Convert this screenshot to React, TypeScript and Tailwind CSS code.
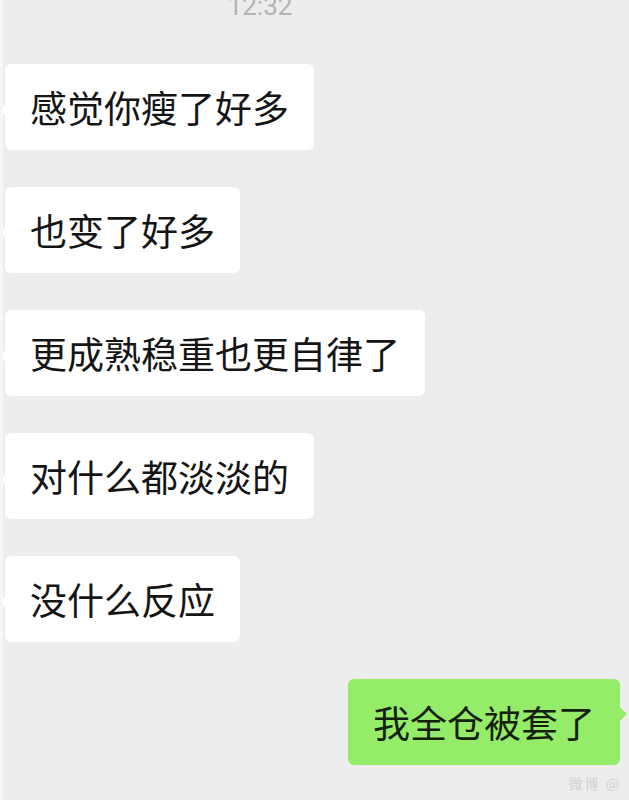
import React from 'react'

const messages = ['感觉你瘦了好多', '也变了好多', '更成熟稳重也更自律了', '对什么都淡淡的', '没什么反应']

const font = { fontFamily: '"Noto Sans CJK SC", "Noto Sans", sans-serif' }

const LeftBubble = ({ text }: { text: string }) => (
	<div className="relative self-start ml-[5px]">
		{/* tail */}
		<div className="absolute left-[-5px] top-[40px] w-0 h-0 border-y-[6px] border-y-transparent border-r-[6px] border-r-white" />
		<div className="bg-white rounded-[6px] h-[86px] px-[25px] flex items-center text-[37px] text-[#151515] leading-none">
			{text}
		</div>
	</div>
)

const RightBubble = ({ text }: { text: string }) => (
	<div className="relative self-end mr-[9px]">
		<div className="absolute right-[-7px] top-[28px] w-0 h-0 border-y-[7px] border-y-transparent border-l-[7px] border-l-[#95ec69]" />
		<div className="bg-[#95ec69] rounded-[6px] h-[86px] px-[25px] flex items-center text-[37px] text-[#13210c] leading-none">
			{text}
		</div>
	</div>
)

export default function App() {
	return (
		<div className="w-[629px] h-[800px] bg-[#ededed] overflow-hidden flex flex-col border-l-[3px] border-l-[#f6f6f6]" style={font}>
			{/* Timestamp */}
			<div className="h-[64px] flex justify-center">
				<div
					className="mt-[-10px] ml-[-112px] text-[26px] text-[#b4b4b4] leading-[32px]"
					style={{ fontFamily: 'Roboto, "Noto Sans", sans-serif' }}
				>
					12:32
				</div>
			</div>

			{/* Messages */}
			<div className="flex flex-col gap-[37px] ml-[-3px]">
				{messages.map((m, i) => (
					<LeftBubble key={i} text={m} />
				))}
				<RightBubble text="我全仓被套了" />
			</div>

			{/* Watermark */}
			<div className="mt-auto mb-[6px] self-end mr-[8px] text-[14px] text-[#d2d2d2] tracking-[2px]">
				微博 @
			</div>
		</div>
	)
}
